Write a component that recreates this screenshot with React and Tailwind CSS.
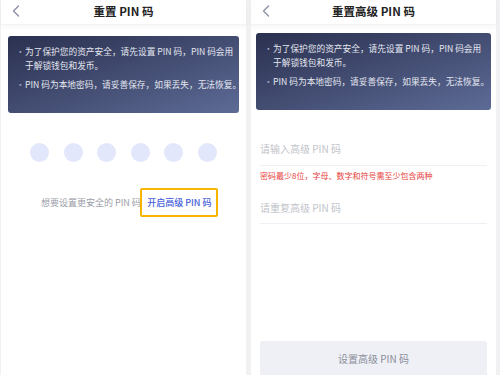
import React from 'react';

const FONT = { fontFamily: '"Noto Sans CJK SC", "Noto Sans", sans-serif' };

const Chevron = () => (
  <svg width="8" height="12" viewBox="0 0 8 12" fill="none">
    <path d="M6.5 1L1.5 6l5 5" stroke="#8d91a6" strokeWidth="1.4" strokeLinecap="round" strokeLinejoin="round" />
  </svg>
);

const Header = ({ title }) => (
  <div className="relative h-[25px] flex items-center justify-center shadow-[0_2px_4px_rgba(0,0,0,0.04)] border-b border-[#f4f4f6]">
    <div className="absolute left-[11px] top-[5px]">
      <Chevron />
    </div>
    <span className="text-[11.5px] font-semibold text-[#222] leading-none">{title}</span>
  </div>
);

const NoticeCard = ({ className }) => (
  <div className={`rounded-[3px] bg-gradient-to-br from-[#2b3150] to-[#5d6b96] text-[8.7px] text-[#e4e7f0] px-[8px] pt-[9px] pb-[14px] ${className}`}>
    <div className="flex leading-[14px]">
      <span className="w-[9px] shrink-0 text-[#aab0c4]">•</span>
      <span>
        <span className="whitespace-nowrap">为了保护您的资产安全，请先设置 PIN 码，PIN 码会用</span>
        <br />
        于解锁钱包和发币。
      </span>
    </div>
    <div className="flex leading-[14px] mt-[5px]">
      <span className="w-[9px] shrink-0 text-[#aab0c4]">•</span>
      <span className="whitespace-nowrap">PIN 码为本地密码，请妥善保存，如果丢失，无法恢复。</span>
    </div>
  </div>
);

export default function App() {
  return (
    <div className="w-[500px] h-[375px] bg-[#f1f1f3] flex overflow-hidden" style={FONT}>
      {/* left screen */}
      <div className="ml-[1px] w-[245px] h-full bg-white flex flex-col">
        <Header title="重置 PIN 码" />
        <NoticeCard className="mx-[7px] mt-[11px] h-[77px]" />
        <div className="flex justify-between px-[29px] mt-[30px]">
          {[0, 1, 2, 3, 4, 5].map((i) => (
            <div key={i} className="w-[19px] h-[19px] rounded-full bg-[#e3e7fb]" />
          ))}
        </div>
        <div className="flex items-center mt-[26px] pl-[40px] text-[9px]">
          <span className="text-[#9b9da7] whitespace-nowrap">想要设置更安全的 PIN 码?</span>
          <span className="-ml-[5px] border-2 border-[#f6b600] rounded-[2px] px-[5px] py-[8px] bg-white text-[#4660d8] font-medium whitespace-nowrap leading-none">
            开启高级 PIN 码
          </span>
        </div>
      </div>

      {/* right screen */}
      <div className="ml-[5px] w-[245px] h-full bg-white flex flex-col">
        <Header title="重置高级 PIN 码" />
        <NoticeCard className="mx-[5px] mt-[8px] h-[77px]" />
        <div className="px-[9px] mt-[31px]">
          <div className="border-b border-[#edf0f4] pb-[8px] text-[10px] text-[#c2c4ca] leading-[16px]">请输入高级 PIN 码</div>
          <div className="mt-[4px] text-[8px] text-[#e8413b] leading-[12px]">密码最少8位，字母、数字和符号需至少包含两种</div>
          <div className="mt-[18px] border-b border-[#edf0f4] pb-[7px] text-[10px] text-[#c2c4ca] leading-[16px]">请重复高级 PIN 码</div>
        </div>
        <div className="mt-auto mx-[9px] h-[34px] rounded-t-[3px] bg-[#eef0f5] flex items-center justify-center text-[10px] text-[#8b8e9a]">
          设置高级 PIN 码
        </div>
      </div>
    </div>
  );
}
